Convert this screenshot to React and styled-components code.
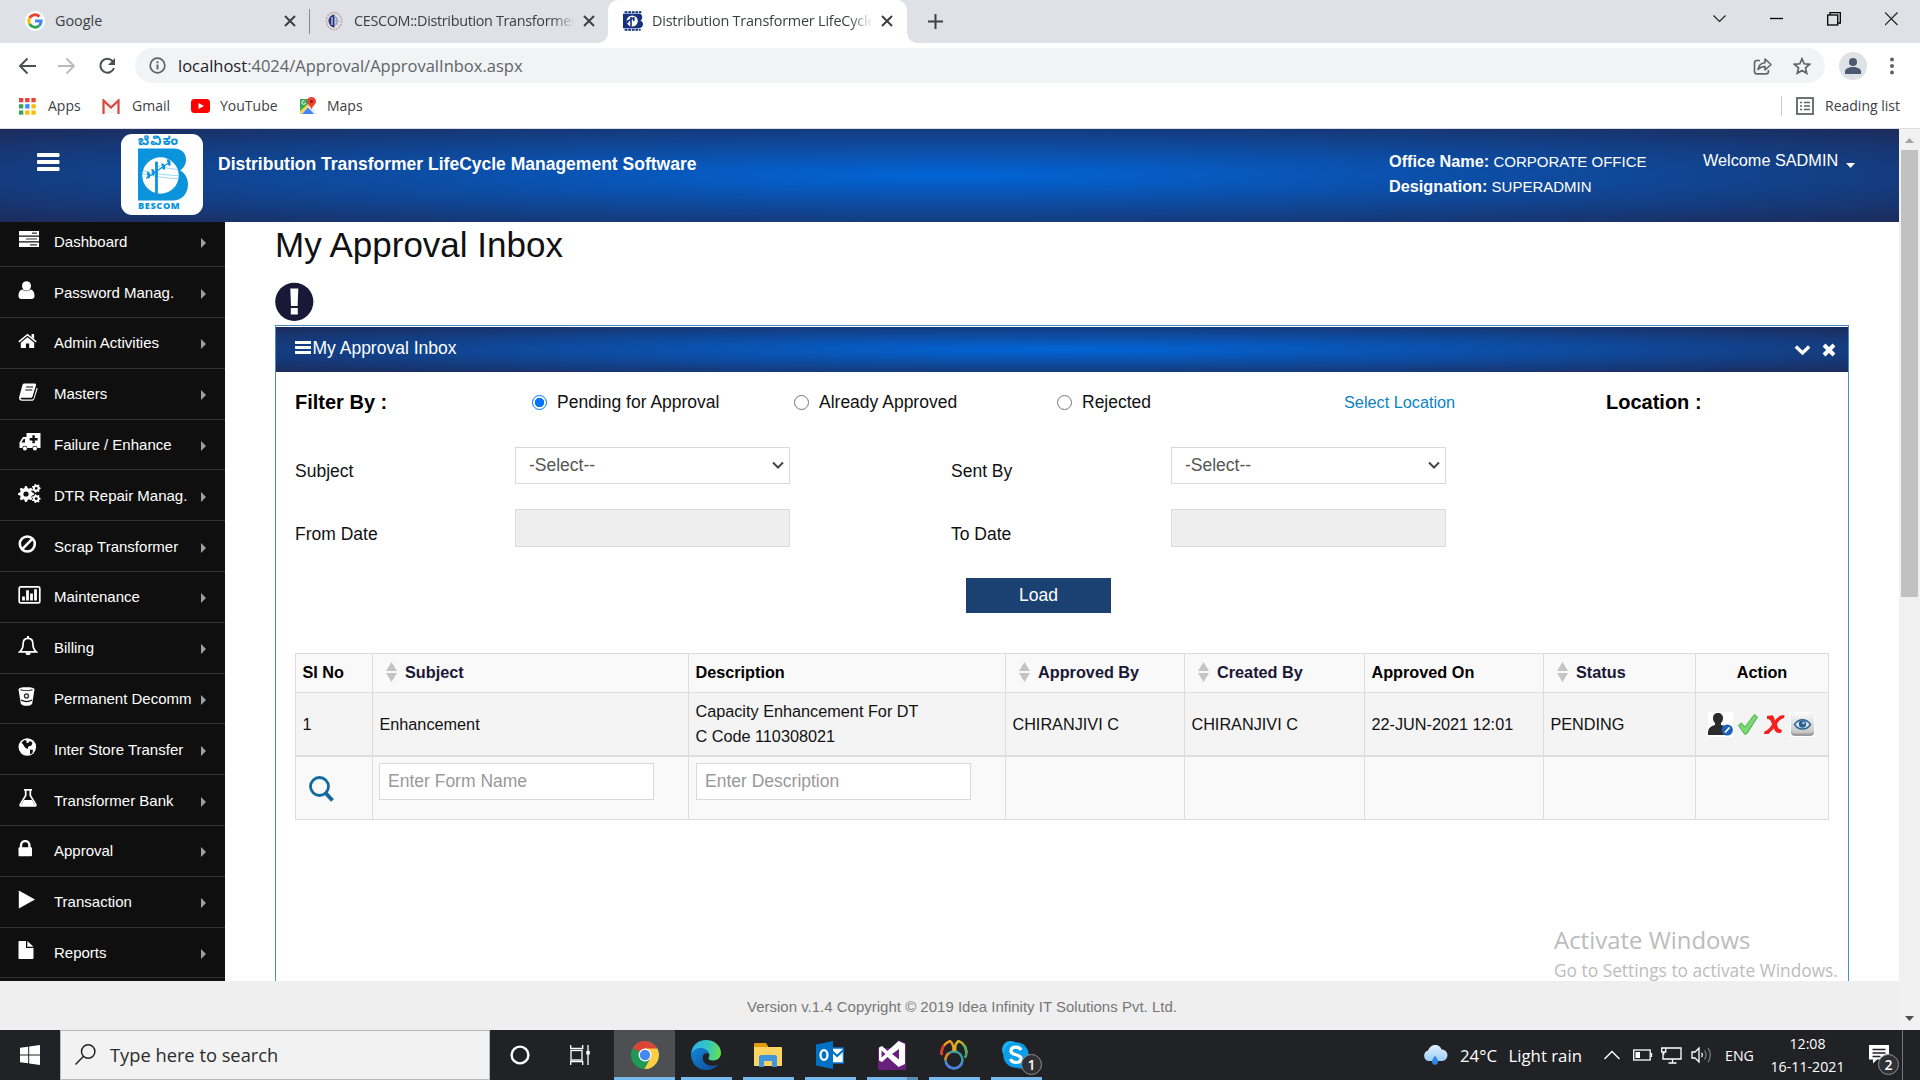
import React from "react";
import styled, { createGlobalStyle, css } from "styled-components";

const Global = createGlobalStyle`
  *, *::before, *::after { box-sizing: border-box; }
  html, body { margin: 0; padding: 0; }
  body { width: 1920px; height: 1080px; overflow: hidden; background: #fff; }
  svg { display: block; flex: none; }
`;

const sans = css`font-family: "Liberation Sans", Arial, sans-serif;`;
const ui = css`font-family: "Open Sans", "Noto Sans", sans-serif;`;

const Screen = styled.div`
  display: flex;
  flex-direction: column;
  width: 1920px;
  height: 1080px;
  overflow: hidden;
  ${sans}
  color: #111;
`;

/* ---------- browser chrome ---------- */

const TabStrip = styled.div`
  display: flex;
  height: 43px;
  background: #dee1e6;
  ${ui}
  font-size: 14.4px;
  color: #3c4043;
`;

const Tab = styled.div`
  display: flex;
  align-items: center;
  position: relative;
  width: ${(p) => p.$w}px;
  height: 43px;
  padding: 0 ${(p) => p.$pr}px 2px ${(p) => p.$pl}px;
  border-radius: 10px 10px 0 0;
  background: ${(p) => (p.$active ? "#fff" : "transparent")};
  ${(p) => p.$active && css`
    &::before, &::after {
      content: "";
      position: absolute;
      bottom: 0;
      width: 10px;
      height: 10px;
    }
    &::before { left: -10px; background: radial-gradient(circle at 0 0, transparent 9.5px, #fff 10px); }
    &::after { right: -10px; background: radial-gradient(circle at 100% 0, transparent 9.5px, #fff 10px); }
  `}
`;

const TabDivider = styled.div`
  width: 1px;
  height: 25px;
  margin-top: 9px;
  background: #8a8d91;
`;

const TabLabel = styled.div`
  flex: 1;
  min-width: 0;
  margin: 0 10px 0 ${(p) => p.$gap}px;
  overflow: hidden;
  white-space: nowrap;
  line-height: 22px;
  letter-spacing: ${(p) => p.$ls || 0}px;
  mask-image: ${(p) => (p.$fade ? "linear-gradient(90deg, #000 90%, transparent 101%)" : "none")};
`;

const NewTab = styled.div`
  padding: 14px 0 0 21px;
`;

const WindowControls = styled.div`
  display: flex;
  margin-left: auto;
  width: 207px;
  gap: 44px;
  padding-top: 12px;
`;

const Toolbar = styled.div`
  display: flex;
  align-items: center;
  height: 45px;
  padding: 0 22px 0 18px;
  background: #fff;
`;

const NavButtons = styled.div`
  display: flex;
  align-items: center;
  gap: 22px;
  width: 117px;
`;

const AddressBar = styled.div`
  display: flex;
  align-items: center;
  width: 1690px;
  height: 35px;
  padding: 0 14px 0 14px;
  border-radius: 18px;
  background: #f1f3f4;
`;

const Url = styled.div`
  flex: 1;
  margin-left: 12px;
  ${ui}
  font-size: 16.5px;
  line-height: 24px;
  color: #5f6368;
  b { font-weight: 400; color: #202124; }
`;

const AddressActions = styled.div`
  display: flex;
  align-items: center;
  gap: 20px;
`;

const Avatar = styled.div`
  display: grid;
  place-items: center;
  width: 28px;
  height: 28px;
  margin: 0 23px 0 14px;
  border-radius: 50%;
  background: #dee1e6;
`;

const Bookmarks = styled.div`
  display: flex;
  align-items: center;
  height: 41px;
  padding: 0 18px 4px 19px;
  border-bottom: 1px solid #dadce0;
  background: #fff;
  ${ui}
  font-size: 14px;
  color: #3c4043;
`;

const Bookmark = styled.div`
  display: flex;
  align-items: center;
  gap: ${(p) => p.$gap}px;
  width: ${(p) => p.$w}px;
  line-height: 20px;
  white-space: nowrap;
`;

const ReadingList = styled(Bookmark)`
  margin-left: auto;
  padding-left: 14px;
  border-left: 1px solid #c8cacd;
`;

/* ---------- page ---------- */

const Viewport = styled.div`
  display: flex;
  height: 901px;
  background: #efefef;
`;

const Page = styled.div`
  display: flex;
  flex-direction: column;
  width: 1899px;
`;

const Header = styled.header`
  display: flex;
  height: 93px;
  background: radial-gradient(ellipse at center, #0264d6 1%, #1c2b5a 100%);
  color: #fff;
`;

const MenuButton = styled.div`
  width: 121px;
  padding: 24px 0 0 37px;
`;

const LogoCard = styled.div`
  display: grid;
  place-items: center;
  width: 82px;
  height: 81px;
  margin-top: 5px;
  padding-left: 2px;
  border-radius: 11px;
  background: #fff;
`;

const AppTitle = styled.div`
  flex: 1;
  padding: 25px 0 0 15px;
  font-size: 17.5px;
  font-weight: 700;
  line-height: 20px;
`;

const Office = styled.div`
  width: 314px;
  padding-top: 20px;
  font-size: 15px;
  line-height: 25px;
  b { font-size: 16.25px; }
`;

const Welcome = styled.div`
  display: flex;
  gap: 8px;
  width: 196px;
  padding-top: 21px;
  font-size: 16.25px;
  line-height: 20px;
  svg { margin-top: 13px; }
`;

const Body = styled.div`
  display: flex;
  height: 759px;
`;

const Sidebar = styled.nav`
  width: 225px;
  overflow: hidden;
  background: #0f0f0f;
`;

const MenuList = styled.div`
  margin-top: -5.6px;
`;

const MenuItem = styled.div`
  display: flex;
  align-items: center;
  height: 50.8px;
  padding: 1px 19px 0 18px;
  border-bottom: 1px solid #333;
  color: #fff;
  font-size: 15px;
  line-height: 20px;
  white-space: nowrap;
`;

const MenuIcon = styled.div`
  width: 36px;
  padding-bottom: 5px;
`;

const MenuArrow = styled.div`
  width: 5px;
  height: 10px;
  margin: 2px 0 0 auto;
  border: 5px solid transparent;
  border-left-color: #a0a0a0;
  border-right: 0;
`;

const Main = styled.main`
  width: 1674px;
  padding: 0 50px;
  background: #fff;
  overflow: hidden;
`;

const PageTitle = styled.h3`
  margin: 0 0 14px;
  padding-top: 3px;
  font-size: 35px;
  font-weight: 400;
  line-height: 40px;
  height: 46px;
  color: #111;
`;

const Panel = styled.section`
  width: 1574px;
  height: 700px;
  margin-top: 4px;
  padding-top: 1px;
  border: 1px solid #4a8bc2;
`;

const PanelHead = styled.div`
  display: flex;
  align-items: center;
  height: 45px;
  padding: 0 12px 3px 19px;
  background: radial-gradient(ellipse at center, #0264d6 1%, #1c2b5a 100%);
  color: #fff;
  font-size: 17.5px;
  line-height: 20px;
`;

const PanelTools = styled.div`
  display: flex;
  align-items: center;
  gap: 11px;
  margin: 3px 0 0 auto;
`;

const PanelBody = styled.div`
  padding: 0 19px;
`;

const FilterRow = styled.div`
  display: flex;
  align-items: center;
  height: 60px;
  font-size: 17.5px;
`;

const FilterCell = styled.div`
  display: flex;
  align-items: center;
  gap: 10px;
  width: ${(p) => p.$w}px;
`;

const Strong = styled.b`
  font-size: 20px;
  color: #000;
`;

const Radio = styled.span`
  width: 15px;
  height: 15px;
  border-radius: 50%;
  border: 1.4px solid ${(p) => (p.$on ? "#0075ff" : "#767676")};
  background: ${(p) => (p.$on ? "radial-gradient(circle, #0075ff 4.4px, #fff 5px)" : "#fff")};
`;

const Link = styled.a`
  color: #0a84c4;
  font-size: 16.25px;
`;

const FormGrid = styled.div`
  display: grid;
  grid-template-columns: 220px 436px 220px 275px;
  grid-template-rows: 62px 63px;
  margin-top: 15px;
  font-size: 17.5px;
`;

const Label = styled.label`
  line-height: 20px;
  padding-top: ${(p) => (p.$low ? 15 : 14)}px;
`;

const Select = styled.div`
  display: flex;
  align-items: center;
  justify-content: space-between;
  width: 275px;
  height: 37px;
  padding: 0 5px 0 13px;
  border: 1px solid #d9d9d9;
  background: #fff;
  color: #555;
`;

const DateBox = styled.div`
  width: 275px;
  height: 38px;
  border: 1px solid #dcdcdc;
  background: #eee;
`;

const LoadButton = styled.button`
  display: block;
  width: 145px;
  height: 35px;
  margin: 6px 0 40px 671px;
  padding: 0;
  border: 0;
  background: #1b4172;
  color: #fff;
  ${sans}
  font-size: 17.5px;
`;

const Table = styled.div`
  display: grid;
  grid-template-columns: 77px 316px 317px 179px 180px 179px 152px 133px;
  grid-template-rows: 39px 64px 63px;
  width: 1534px;
  border-top: 1px solid #ddd;
  border-left: 1px solid #ddd;
  font-size: 16.25px;
  line-height: 25px;
`;

const Cell = styled.div`
  display: flex;
  align-items: ${(p) => (p.$top ? "flex-start" : "center")};
  justify-content: ${(p) => (p.$center ? "center" : "flex-start")};
  padding: ${(p) => (p.$top ? "6px 6px" : "0 6.4px")};
  border-right: 1px solid #ddd;
  border-bottom: ${(p) => (p.$thick ? 2 : 1)}px solid #ddd;
  background: ${(p) => (p.$shade ? "#f4f4f4" : "#f9f9f9")};
  white-space: nowrap;
`;

const HeadCell = styled(Cell)`
  gap: 8.5px;
  padding-bottom: 2px;
  padding-left: ${(p) => (p.$sort ? 12.5 : 6.4)}px;
  font-weight: 700;
  color: ${(p) => (p.$sort ? "#1a1836" : "#000")};
`;

const TextInput = styled.div`
  width: 275px;
  height: 37px;
  margin-left: ${(p) => p.$shift || 0}px;
  padding: 5px 8px;
  border: 1px solid #d9d9d9;
  background: #fff;
  color: #999;
  font-size: 17.5px;
`;

const SearchIcon = styled.div`
  padding: 13px 0 0 7px;
`;

const Actions = styled.div`
  display: flex;
  align-items: center;
  gap: 5px;
  padding-left: 6px;
`;

const Footer = styled.footer`
  height: 49px;
  padding-left: 747px;
  background: #efefef;
  color: #777;
  font-size: 15px;
  line-height: 51px;
`;

const Scrollbar = styled.div`
  display: flex;
  flex-direction: column;
  align-items: center;
  width: 21px;
  height: 901px;
  padding: 9px 0;
  background: #f1f1f1;
`;

const Thumb = styled.div`
  width: 17px;
  height: 447px;
  margin: 7px 0 auto;
  background: #c1c1c1;
`;

const Watermark = styled.div`
  position: absolute;
  left: 1554px;
  top: 921px;
  height: 60px;
  overflow: hidden;
  ${ui}
  color: #bcbcbc;
  font-size: 17.33px;
  line-height: 24px;
  white-space: nowrap;
  strong { display: block; font-size: 23.95px; font-weight: 400; line-height: 37px; }
`;

/* ---------- taskbar ---------- */

const Taskbar = styled.div`
  display: flex;
  height: 50px;
  background: #212225;
  ${ui}
  color: #fff;
`;

const StartButton = styled.div`
  display: grid;
  place-items: center;
  width: 60px;
`;

const SearchBox = styled.div`
  display: flex;
  align-items: center;
  gap: 14px;
  width: 430px;
  padding: 0 0 2px 14px;
  border: 1px solid #b9b9b9;
  background: #f2f2f2;
  color: #2b2b2b;
  font-size: 18.3px;
`;

const TaskButton = styled.div`
  display: flex;
  align-items: center;
  justify-content: center;
  position: relative;
  width: ${(p) => p.$w || 62}px;
  height: 50px;
  padding-right: ${(p) => p.$pr || 0}px;
  background: ${(p) => (p.$active ? "#4e4f52" : "transparent")};
  &::after {
    content: "";
    position: absolute;
    left: ${(p) => (p.$active ? 0 : 6)}px;
    right: ${(p) => (p.$active ? 0 : 5)}px;
    bottom: 0;
    height: ${(p) => (p.$open ? 3 : 0)}px;
    background: ${(p) => (p.$multi ? "linear-gradient(90deg, #76b9ed 40px, #5b8db4 40px)" : "#76b9ed")};
  }
`;

const Badge = styled.span`
  display: grid;
  place-items: center;
  position: absolute;
  left: ${(p) => p.$x}px;
  top: 24px;
  width: 21px;
  height: 21px;
  border: 1px solid #929292;
  border-radius: 50%;
  background: #303134;
  font-size: 14px;
  line-height: 18px;
  font-weight: 600;
`;

const Tray = styled.div`
  display: flex;
  align-items: center;
  margin-left: auto;
  width: 498px;
`;

const TrayItem = styled.div`
  position: relative;
  width: ${(p) => p.$w}px;
  font-size: ${(p) => p.$size || 16}px;
  line-height: 23px;
  white-space: nowrap;
  text-align: ${(p) => p.$align || "left"};
`;

const ShowDesktop = styled.div`
  width: 6px;
  height: 50px;
  border-left: 1px solid #77787a;
`;

/* ---------- icons ---------- */

const Svg = ({ w, h, vb, children, ...rest }) => (
  <svg width={w} height={h} viewBox={vb || `0 0 ${w} ${h}`} fill="none" {...rest}>{children}</svg>
);

const CloseIcon = () => (
  <Svg w={12} h={12} stroke="#3c4043" strokeWidth="2"><path d="M1 1l10 10M11 1L1 11" /></Svg>
);

const GoogleIcon = () => (
  <Svg w={20} h={20}>
    <circle cx="10" cy="10" r="10" fill="#fff" />
    <g strokeWidth="2.9">
      <path d="M14.4 5.6A6.2 6.2 0 0 0 4.6 7" stroke="#ea4335" />
      <path d="M4.6 7a6.2 6.2 0 0 0 0 6" stroke="#fbbc05" />
      <path d="M4.6 13a6.2 6.2 0 0 0 9.6 1.6" stroke="#34a853" />
      <path d="M14.2 14.6a6.2 6.2 0 0 0 2-4.6H10" stroke="#4285f4" />
    </g>
  </Svg>
);

const CescomIcon = () => (
  <Svg w={18} h={20}>
    <ellipse cx="9" cy="10" rx="7.6" ry="8.6" stroke="#c9a0a0" strokeWidth="1.5" strokeDasharray="2 1" />
    <path d="M9.500 3.500a6 6.5 0 0 0 0 13z" fill="#27357e" />
    <path d="M9 4.5a5 6 0 0 1 0 11M9 7h4M9 10h5M9 13h4" stroke="#8b92b8" />
    <path d="M7 6v8" stroke="#fff" />
  </Svg>
);

const bShape = "M0 9h36c8 0 12 5 12 11 0 6-3 9-6 11 5 2 8 8 8 14 0 9-6 16-15 16H0z";

const BescomFavicon = () => (
  <Svg w={20} h={20} vb="0 0 50 50" fill="#15307c">
    <path d="M4 3h42M4 47h40" stroke="#15307c" strokeWidth="5" strokeDasharray="7 2" />
    <path d="M0 7h38c8 0 10 4 10 9s-2 6-5 8c5 2 7 5 7 9 0 6-5 10-13 10H0z" />
    <circle cx="23" cy="25" r="14" fill="#fff" />
    <path d="M20 15v24M9 27l20-11M12 23v7M27 17v8" stroke="#15307c" strokeWidth="4" />
  </Svg>
);

const LogoStack = styled.div`
  display: flex;
  flex-direction: column;
  width: 50px;
`;

const LogoText = styled.div`
  font-family: ${(p) => (p.$latin ? '"Open Sans", sans-serif' : '"Noto Sans Kannada", "Noto Sans", sans-serif')};
  font-size: ${(p) => (p.$latin ? 9.2 : 12)}px;
  font-weight: 800;
  line-height: 9px;
  height: 9px;
  width: 50px;
  color: #0b93dc;
  letter-spacing: ${(p) => (p.$latin ? 0.6 : 1.2)}px;
  white-space: nowrap;
`;

const LogoB = () => (
  <Svg w={50} h={53} vb="0 8.5 50 53">
    <path d={bShape} fill="#0b93dc" />
    <circle cx="22.500" cy="36" r="18.2" fill="#fff" />
    <g stroke="#0b93dc">
      <path d="M18.500 22v32" strokeWidth="2.800" />
      <path d="M8 39l24-16.500" strokeWidth="1.200" />
      <path d="M9 33.500c2 0 2.500 3 1 5M13.500 30.500c2 0 3 3 1 5M23.500 25c2 0 3 2 2 5M29 21c2 0 3 2 2 5" strokeWidth="2.600" />
      <path d="M5 31c10 3 26 5 35 5M5 34c10 3 26 5 35 5M20 27l19 3" strokeWidth=".4" />
    </g>
  </Svg>
);

const GearPath = ({ cx, cy, r, teeth, hole }) => {
  const pts = [];
  const n = teeth * 4;
  for (let i = 0; i < n; i++) {
    const a = ((i - 0.5) / n) * Math.PI * 2;
    const rad = i % 4 < 2 ? r : r * 0.76;
    pts.push(`${(cx + rad * Math.cos(a)).toFixed(2)} ${(cy + rad * Math.sin(a)).toFixed(2)}`);
  }
  const d = `M${pts.join("L")}ZM${cx - hole} ${cy}a${hole} ${hole} 0 1 0 ${hole * 2} 0a${hole} ${hole} 0 1 0 ${-hole * 2} 0Z`;
  return <path d={d} fill="#fff" fillRule="evenodd" />;
};

const menuIcons = {
  tasks: (
    <Svg w={22} h={17}>
      <path d="M1 0h20v4.500H1zM1 5.800h20v4.500H1zM1 11.600h20v4.500H1z" fill="#fff" />
      <path d="M14 2.200h5M8 8h11M12 13.800h7" stroke="#333" strokeWidth="1.200" />
    </Svg>
  ),
  user: (
    <Svg w={17} h={18}>
      <ellipse cx="8.500" cy="5" rx="4.500" ry="4.800" fill="#fff" />
      <path d="M4.500 8.500C1.500 9 .5 12 .5 15c0 2 1.200 3 3 3h10c1.800 0 3-1 3-3 0-3-1-6-4-6.500-2.200 2.200-5.800 2.200-8 0z" fill="#fff" />
    </Svg>
  ),
  home: (
    <Svg w={19} h={16}>
      <path d="M9.500 4.200l6.700 5.500V15h-5v-4.600H7.900V15H2.800V9.700z" fill="#fff" />
      <path d="M.8 8.800L9.500 1.600l8.700 7.200" stroke="#fff" strokeWidth="1.500" />
      <path d="M13.600 1h2.500v5l-2.500-2z" fill="#fff" />
    </Svg>
  ),
  book: (
    <Svg w={20} h={18}>
      <path d="M6.200.5h10.600c1 0 1.500.8 1.200 1.700l-3.400 11c-.3 1-1 1.500-2 1.500H3.400c-.7 0-.9.400-.6 1 .2.500.7.700 1.400.700h10c.6 0 1.100-.3 1.300-.9l3.200-10.800c.8.300 1 1 .7 1.900L16.300 16c-.4 1.200-1.200 1.800-2.400 1.800H4c-2 0-3.400-1.700-2.900-3.500L4.500 2C4.800 1 5.400.5 6.200.5z" fill="#fff" />
      <path d="M8 4h7M7.200 7h7" stroke="#0f0f0f" strokeWidth="1.100" />
    </Svg>
  ),
  ambulance: (
    <Svg w={23} h={19}>
      <path d="M8.500 0h14v15h-3a2.700 2.700 0 0 0-5.300 0H9.500a2.700 2.700 0 0 0-5.300 0H1.500V9.500L5 4h3.500z" fill="#fff" />
      <circle cx="6.900" cy="15.600" r="2" fill="#fff" /><circle cx="16.900" cy="15.600" r="2" fill="#fff" />
      <path d="M15.600 2.200v8M11.600 6.200h8" stroke="#0f0f0f" strokeWidth="2.400" />
      <path d="M7 6v3.600H3.400L5.700 6z" fill="#0f0f0f" />
    </Svg>
  ),
  cogs: (
    <Svg w={23} h={19}>
      <GearPath cx={8} cy={10} r={8} teeth={8} hole={2.6} />
      <GearPath cx={18.2} cy={4.3} r={4.5} teeth={7} hole={1.4} />
      <GearPath cx={18.2} cy={14.7} r={4.5} teeth={7} hole={1.4} />
    </Svg>
  ),
  ban: (
    <Svg w={19} h={18} stroke="#fff" strokeWidth="2.600"><circle cx="9.300" cy="9" r="7.500" /><path d="M4 14.300L14.600 3.700" /></Svg>
  ),
  chart: (
    <Svg w={23} h={18}>
      <rect x="1.200" y=".9" width="20.600" height="16" rx="1.500" stroke="#fff" strokeWidth="1.700" />
      <path d="M5.500 14.600v-4M9.500 14.600V4.200M13.500 14.600V7.500M17.500 14.600V3.200" stroke="#fff" strokeWidth="2.800" />
    </Svg>
  ),
  bell: (
    <Svg w={20} h={20}>
      <path d="M10 2.400c-3.400 0-4.900 2.500-4.900 5.600 0 3.900-1.300 6-3.400 7.800h16.600c-2.100-1.800-3.400-3.900-3.400-7.800 0-3.100-1.500-5.600-4.900-5.600z" stroke="#fff" strokeWidth="1.700" />
      <path d="M10 0v2.500" stroke="#fff" strokeWidth="2" /><path d="M7.500 16.500h5.200a2.600 2.600 0 0 1-5.200 0z" fill="#fff" />
    </Svg>
  ),
  bucket: (
    <Svg w={18} h={19}>
      <path d="M.5 2.500C.5.800 4 .2 8.500.2s8 .6 8 2.300l-2.300 14c-.7 1.500-2.700 2.300-5.700 2.300s-5-.8-5.700-2.300z" fill="#fff" />
      <path d="M2.500 2.700c3 1 9 1 12 0M3 13c3.500 2 7.500 2 11 0" stroke="#0f0f0f" strokeWidth="1.100" />
      <circle cx="8.500" cy="9" r="2" stroke="#333" strokeWidth="1.400" />
    </Svg>
  ),
  globe: (
    <Svg w={19} h={18}>
      <circle cx="9.300" cy="9" r="8.800" fill="#fff" />
      <path d="M3.500 4.500l3-2.500 2.500 1-1 1.500 2 .5L12 3l2.500 1.500-1 3-3 1-1 2.500L7 9.500 5.500 7zM12 11.500l3 .5-.5 3-2.500 1.500z" fill="#0f0f0f" />
    </Svg>
  ),
  flask: (
    <Svg w={20} h={18}>
      <path d="M7.700 1v5.500L2.300 15.300c-.5 1 0 1.700 1 1.700h13.400c1 0 1.500-.7 1-1.700L12.300 6.500V1M6 .9h8" stroke="#fff" strokeWidth="1.700" />
      <path d="M6 11h8l3.500 6H2.500z" fill="#fff" />
    </Svg>
  ),
  lock: (
    <Svg w={15} h={17}>
      <path d="M3 8V5.300a4.200 4.200 0 0 1 8.400 0V8" stroke="#fff" strokeWidth="2.400" /><rect x=".5" y="7.300" width="13.500" height="9" rx="1" fill="#fff" />
    </Svg>
  ),
  play: <Svg w={18} h={19}><path d="M.8.500L17 9.500.8 18.500z" fill="#fff" /></Svg>,
  file: (
    <Svg w={16} h={18}><path d="M1.500 0H8v7h7.500v10c0 .600-.4 1-1 1h-13c-.6 0-1-.4-1-1V1c0-.6.400-1 1-1z" fill="#fff" /><path d="M9.300 0l6.200 5.800H9.300z" fill="#fff" /></Svg>
  ),
};

const menu = [
  ["Dashboard", "tasks"], ["Password Manag.", "user"], ["Admin Activities", "home"], ["Masters", "book"],
  ["Failure / Enhance", "ambulance"], ["DTR Repair Manag.", "cogs"], ["Scrap Transformer", "ban"],
  ["Maintenance", "chart"], ["Billing", "bell"], ["Permanent Decomm", "bucket"], ["Inter Store Transfer", "globe"],
  ["Transformer Bank", "flask"], ["Approval", "lock"], ["Transaction", "play"], ["Reports", "file"],
];

const columns = [
  ["SI No"], ["Subject", true], ["Description"], ["Approved By", true], ["Created By", true],
  ["Approved On"], ["Status", true], ["Action", false, true],
];

const SortIcon = () => (
  <Svg w={11} h={20}><path d="M5.500 0L11 9H0zM0 11h11l-5.500 9z" fill="#c4c4c4" /></Svg>
);

const SelectArrow = () => (
  <Svg w={12} h={9}><path d="M1 1.500l5 5 5-5" stroke="#444" strokeWidth="2" /></Svg>
);

const ActionIcons = () => (
  <Actions>
    <Svg w={25} h={25}>
      <rect width="25" height="25" fill="#fff" />
      <path d="M10 1c3 0 5 2 5 5 0 2-.7 4-2 5v2c4 .8 7 2.500 7 8v2H0v-2c0-5 3-7 7-8v-2C5.700 10 5 8 5 6c0-3 2-5 5-5z" fill="#2c2c2e" />
      <circle cx="19.300" cy="18" r="5.600" fill="#1c62b9" />
      <path d="M17 20.500l4.500-5" stroke="#fff" strokeWidth="1.800" />
    </Svg>
    <Svg w={20} h={21}>
      <path d="M.5 11.500l3-2.500 3.500 4L16.500.5 19.500 3 9 19.500l-2 1z" fill="#7ad972" stroke="#3fae40" />
    </Svg>
    <Svg w={22} h={21}>
      <path d="M4 2l5-.800c1.500 0 2.500 3 3 5.500C14 3.500 17 1 21.500 1l-.5 3c-3.500 1-5.500 3-7 6 .5 3 1.500 5.500 5 6l-1 3c-4 .5-6-1-7-4.500-2 1.500-3.500 3.500-5.500 5.500L1 20l.5-2.500C5 16 7.500 13 9 10.500 8.500 7.500 7.500 5 4 5z" fill="#f3201c" />
    </Svg>
    <Svg w={25} h={25}>
      <defs><linearGradient id="key" x2="0" y2="1"><stop stopColor="#fafafa" /><stop offset="1" stopColor="#c4c4c4" /></linearGradient></defs>
      <rect width="25" height="25" fill="#fff" />
      <rect x="1" y="1" width="23" height="23" rx="4" fill="#9c9c9c" />
      <rect x="1" y="1" width="23" height="20.500" rx="4" fill="url(#key)" />
      <path d="M4.500 12.500c4-6.500 12-6.500 16 0-4 6-12 6-16 0z" fill="#dbe9f2" stroke="#2e6591" strokeWidth="1.500" />
      <circle cx="12.500" cy="12" r="3.700" fill="#2a618f" /><circle cx="13.500" cy="11" r="1.300" fill="#a8cce6" />
    </Svg>
  </Actions>
);

const ChromeIcon = () => (
  <Svg w={28} h={28}>
    <circle cx="14" cy="14" r="14" fill="#1e9a55" />
    <path d="M14 14L1.900 7A14 14 0 0 1 26.100 7z" fill="#db4437" />
    <path d="M14 7.500h12.400A14 14 0 0 1 13.500 28l6-11z" fill="#ffcd41" />
    <path d="M1.900 7A14 14 0 0 1 14 0v10z" fill="#db4437" />
    <circle cx="14" cy="14" r="6.500" fill="#fff" /><circle cx="14" cy="14" r="5.200" fill="#4688f1" />
  </Svg>
);

const EdgeIcon = () => (
  <Svg w={30} h={30}>
    <defs>
      <linearGradient id="ea" x1="0" y1=".3" x2="1" y2=".4"><stop stopColor="#2bb0ec" /><stop offset=".6" stopColor="#36c9b8" /><stop offset="1" stopColor="#66e04d" /></linearGradient>
      <linearGradient id="eb" x2="1" y2="1"><stop stopColor="#1287d8" /><stop offset="1" stopColor="#104a94" /></linearGradient>
    </defs>
    <path d="M0 14C1 5 7 0 15 0c9 0 15 6 15 13 0 5-4 7.500-8 7.500-3 0-5-1-4.500-2.500 1-1.500 1.500-3 0-5.500C15 8.500 5 8 0 14z" fill="url(#ea)" />
    <path d="M0 14C3 8 10 7 14 9c3 1.500 4 4 3 5-3-2-6 1-5 6 1 4 6 6.500 12 5.500 1.500-.5 3-1 3.500-1.500C25 28 20 30 15 30 6 30 0 23 0 14z" fill="url(#eb)" />
  </Svg>
);

const FolderIcon = () => (
  <Svg w={28} h={24}>
    <path d="M0 1c0-.6.400-1 1-1h11l2 3v5H0z" fill="#e09c0c" />
    <path d="M0 4h27c.600 0 1 .4 1 1v18H0z" fill="#fcd462" />
    <path d="M5 24V14c0-1 .800-2 2-2h14c1.200 0 2 1 2 2v10h-5v-6h-8v6z" fill="#3f96dc" />
  </Svg>
);

const OutlookIcon = () => (
  <Svg w={28} h={28}>
    <rect x="15" y="7" width="12.500" height="15" fill="#fff" stroke="#0072c6" strokeWidth="1.500" />
    <path d="M15 9l6 6 6.500-6" stroke="#0072c6" strokeWidth="2" />
    <path d="M0 3.500L17 0v28L0 24.500z" fill="#0072c6" />
    <ellipse cx="8" cy="14" rx="3.500" ry="4.800" stroke="#fff" strokeWidth="2.300" />
  </Svg>
);

const VsIcon = () => (
  <Svg w={28} h={30}>
    <path d="M0 8h20V0l8 3v27H0z" fill="#68217a" />
    <path d="M20.500 1L27 4v20l-6.500 3-11-10L4 22l-3-1.500v-13L4 6l5.500 5z" fill="#fff" />
    <path d="M3.500 10.500v7l4-3.500zM21 9l-7 5 7 5.500z" fill="#68217a" />
  </Svg>
);

const NavicatIcon = () => (
  <Svg w={28} h={30} strokeWidth="2.400">
    <circle cx="14" cy="20" r="8.500" stroke="#38a0a8" />
    <path d="M6 22.500a8.500 8.500 0 0 0 16 0" stroke="#4f7fe0" />
    <path d="M5.500 20A8.500 8.500 0 0 1 9 13" stroke="#f0801e" />
    <path d="M2 15C.5 9 4 3 10 1c3 2 4 7 3 10" stroke="#f19a1c" />
    <path d="M2 15c-1-4 0-7 2-9.500" stroke="#e33a2b" />
    <path d="M15.500 11c-1-4 .5-8 3-10 5 2 9 7 7.500 13" stroke="#d8b52a" />
    <path d="M26 14c.500 2-.5 3-1.500 3.500M23 4.500c2.500 2.500 3.700 6 3 9.500" stroke="#4dad6a" />
  </Svg>
);

const SkypeIcon = () => (
  <Svg w={28} h={28}>
    <circle cx="8.500" cy="8.500" r="8.500" fill="#1bb1f4" /><circle cx="19.500" cy="19.500" r="8.500" fill="#0a84dc" /><circle cx="14" cy="14" r="12.700" fill="#0b9fea" />
    <path d="M19 9c-1-2-3-2.800-5-2.800-3 0-5 1.500-5 3.800 0 5 10 2.500 10 7.500 0 2.500-2 4-5 4-2.500 0-4.500-1-5.500-3.500" stroke="#fff" strokeWidth="3.200" />
  </Svg>
);

export default function App() {
  return (
    <Screen>
      <Global />
      <TabStrip>
        <Tab $w={309} $pl={25} $pr={13}>
          <GoogleIcon /><TabLabel $gap={10}>Google</TabLabel><CloseIcon />
        </Tab>
        <TabDivider />
        <Tab $w={298} $pl={15} $pr={13}>
          <CescomIcon /><TabLabel $gap={11} $fade $ls={-0.33}>CESCOM::Distribution Transformer</TabLabel><CloseIcon />
        </Tab>
        <Tab $w={299} $pl={15} $pr={14} $active>
          <BescomFavicon /><TabLabel $gap={9} $fade $ls={-0.2}>Distribution Transformer LifeCycle</TabLabel><CloseIcon />
        </Tab>
        <NewTab><Svg w={15} h={15} stroke="#3c4043" strokeWidth="2"><path d="M7.500 0v15M0 7.500h15" /></Svg></NewTab>
        <WindowControls>
          <Svg w={13} h={14} stroke="#222" strokeWidth="1.200"><path d="M.5 3.500l6 6 6-6" /></Svg>
          <Svg w={13} h={14} stroke="#000" strokeWidth="1.300"><path d="M0 6.500h13" /></Svg>
          <Svg w={14} h={14} stroke="#000" strokeWidth="1.300"><rect x=".7" y="3" width="10" height="10" /><path d="M3 3V.7h10.300V11H11" /></Svg>
          <Svg w={14} h={14} stroke="#222" strokeWidth="1.200"><path d="M0 .5l12.500 12.500M12.500.5L0 13" /></Svg>
        </WindowControls>
      </TabStrip>

      <Toolbar>
        <NavButtons>
          <Svg w={18} h={18} stroke="#4a4d51" strokeWidth="1.900"><path d="M18 9H2M9.500 1.500L2 9l7.500 7.500" /></Svg>
          <Svg w={18} h={18} stroke="#b9bbbe" strokeWidth="1.900"><path d="M0 9h16M8.500 1.500L16 9l-7.500 7.500" /></Svg>
          <Svg w={18} h={18} stroke="#4a4d51" strokeWidth="2"><path d="M15 4.500A7 7 0 1 0 16 11" /><path d="M17 1v7h-7z" fill="#4a4d51" stroke="none" /></Svg>
        </NavButtons>
        <AddressBar>
          <Svg w={17} h={17} stroke="#5f6368"><circle cx="8.500" cy="8.500" r="7.300" strokeWidth="1.700" /><path d="M8.500 7.500v5M8.500 4.300v1.900" strokeWidth="1.900" /></Svg>
          <Url><b>localhost</b>:4024/Approval/ApprovalInbox.aspx</Url>
          <AddressActions>
            <Svg w={20} h={18} stroke="#5f6368" strokeWidth="1.600"><path d="M7 3.500H4c-1.500 0-2.500 1-2.500 2.500v8.500c0 1.400 1 2.400 2.500 2.400h9c1.400 0 2.400-1 2.400-2.400V13" /><path d="M5 12.500c.5-4 3-6.500 7-6.800V2l6 5.500-6 5.500V9.500c-3 0-5 .8-7 3z" strokeLinejoin="round" /></Svg>
            <Svg w={18} h={18} stroke="#5f6368" strokeWidth="1.700"><path d="M9 1.800l2.200 5 5.400.5-4.100 3.600 1.200 5.300L9 13.400l-4.700 2.800 1.200-5.300L1.400 7.300l5.400-.5z" /></Svg>
          </AddressActions>
        </AddressBar>
        <Avatar><Svg w={16} h={16}><circle cx="8" cy="4" r="4" fill="#4b5a70" /><path d="M0 16v-2.500C0 10.500 4 9 8 9s8 1.500 8 4.500V16z" fill="#4b5a70" /></Svg></Avatar>
        <Svg w={4} h={18} fill="#5f6368"><circle cx="2" cy="2.500" r="2" /><circle cx="2" cy="9" r="2" /><circle cx="2" cy="15.500" r="2" /></Svg>
      </Toolbar>

      <Bookmarks>
        <Bookmark $w={83} $gap={12}>
          <Svg w={17} h={17}>
            {["#ea4335", "#ea4335", "#ea4335", "#34a853", "#4285f4", "#fbbc05", "#34a853", "#fbbc05", "#fbbc05"].map((c, i) => (
              <rect key={i} x={(i % 3) * 6.2} y={Math.floor(i / 3) * 6.2} width="4.300" height="4.300" fill={c} />
            ))}
          </Svg>Apps
        </Bookmark>
        <Bookmark $w={89} $gap={11}>
          <Svg w={19} h={15}><path d="M1 1h17v13H1z" fill="#f4f4f4" /><path d="M1.500 15V1.500l7.500 7 7.500-7V15" stroke="#d9483b" strokeWidth="2.200" /></Svg>Gmail
        </Bookmark>
        <Bookmark $w={108} $gap={9}>
          <Svg w={20} h={14}><rect width="19" height="14" rx="3.500" fill="#f00" /><path d="M7.500 4l5.500 3-5.500 3z" fill="#fff" /></Svg>YouTube
        </Bookmark>
        <Bookmark $w={80} $gap={10}>
          <Svg w={18} h={18}><path d="M1 2h11v15H1z" fill="#34a853" /><path d="M1 17L12 6l5 11z" fill="#e8eaed" /><path d="M3 17l6-6.500L15 17z" fill="#4285f4" /><path d="M1 14L12 4v3L2 17H1z" fill="#fbd04a" /><path d="M12.500 0C15 0 17 2 17 4.500c0 3-3.500 4-4.500 8-1-4-4.500-5-4.500-8C8 2 10 0 12.500 0z" fill="#e94335" /><circle cx="12.500" cy="4.500" r="1.500" fill="#8c1a12" /><path d="M6.500 5.500a1.800 1.800 0 1 1-1-1.600" stroke="#fff" /></Svg>Maps
        </Bookmark>
        <ReadingList $w={121} $gap={11}>
          <Svg w={18} h={18} stroke="#5f6368"><rect x="1" y="1" width="16" height="16" strokeWidth="1.800" /><path d="M4 5.500h2M8 5.500h6M4 9h2M8 9h6M4 12.500h2M8 12.500h6" strokeWidth="1.600" /></Svg>Reading list
        </ReadingList>
      </Bookmarks>

      <Viewport>
        <Page>
          <Header>
            <MenuButton><Svg w={23} h={19} fill="#fff"><rect width="22.500" height="4" rx="1" /><rect y="7" width="22.500" height="4" rx="1" /><rect y="14" width="22.500" height="4" rx="1" /></Svg></MenuButton>
            <LogoCard>
              <LogoStack>
                <LogoText>ಬೆವಿಕಂ</LogoText>
                <LogoB />
                <LogoText $latin>BESCOM</LogoText>
              </LogoStack>
            </LogoCard>
            <AppTitle>Distribution Transformer LifeCycle Management Software</AppTitle>
            <Office>
              <div><b>Office Name:</b> CORPORATE OFFICE</div>
              <div><b>Designation:</b> SUPERADMIN</div>
            </Office>
            <Welcome>Welcome SADMIN<Svg w={9} h={5}><path d="M0 0h9L4.500 5z" fill="#fff" /></Svg></Welcome>
          </Header>
          <Body>
            <Sidebar>
              <MenuList>
                {menu.map(([label, icon]) => (
                  <MenuItem key={label}><MenuIcon>{menuIcons[icon]}</MenuIcon>{label}<MenuArrow /></MenuItem>
                ))}
              </MenuList>
            </Sidebar>
            <Main>
              <PageTitle>My Approval Inbox</PageTitle>
              <Svg w={39} h={39}><circle cx="19.300" cy="19.800" r="19.100" fill="#1a1836" /><path d="M15.300 6.500h8l-.7 17.500h-6.600zM15.800 26h7v6.500h-7z" fill="#fff" /></Svg>
              <Panel>
                <PanelHead>
                  <Svg w={17.5} h={14} fill="#fff"><rect width="16" height="3" /><rect y="5" width="16" height="3" /><rect y="10" width="16" height="3" /></Svg>
                  My Approval Inbox
                  <PanelTools>
                    <Svg w={17} h={12}><path d="M1.800 2.500l6.700 6.500 6.700-6.500" stroke="#fff" strokeWidth="3.400" /></Svg>
                    <Svg w={14} h={14}><path d="M2 2l10 10M12 2L2 12" stroke="#fff" strokeWidth="4" /></Svg>
                  </PanelTools>
                </PanelHead>
                <PanelBody>
                  <FilterRow>
                    <FilterCell $w={237}><Strong>Filter By :</Strong></FilterCell>
                    <FilterCell $w={262}><Radio $on />Pending for Approval</FilterCell>
                    <FilterCell $w={263}><Radio />Already Approved</FilterCell>
                    <FilterCell $w={287}><Radio />Rejected</FilterCell>
                    <FilterCell $w={262}><Link>Select Location</Link></FilterCell>
                    <Strong>Location :</Strong>
                  </FilterRow>
                  <FormGrid>
                    <Label>Subject</Label><Select>-Select--<SelectArrow /></Select>
                    <Label>Sent By</Label><Select>-Select--<SelectArrow /></Select>
                    <Label $low>From Date</Label><DateBox />
                    <Label $low>To Date</Label><DateBox />
                  </FormGrid>
                  <LoadButton>Load</LoadButton>
                  <Table>
                    {columns.map(([label, sort, center]) => (
                      <HeadCell key={label} $sort={sort} $center={center}>{sort && <SortIcon />}{label}</HeadCell>
                    ))}
                    <Cell $shade $thick>1</Cell>
                    <Cell $shade $thick>Enhancement</Cell>
                    <Cell $shade $thick>Capacity Enhancement For DT<br />C Code 110308021</Cell>
                    <Cell $shade $thick>CHIRANJIVI C</Cell>
                    <Cell $shade $thick>CHIRANJIVI C</Cell>
                    <Cell $shade $thick>22-JUN-2021 12:01</Cell>
                    <Cell $shade $thick>PENDING</Cell>
                    <Cell $shade $thick><ActionIcons /></Cell>
                    <Cell $top><SearchIcon><Svg w={25} h={26} stroke="#10699f"><circle cx="10.500" cy="10.500" r="9" strokeWidth="2.800" /><path d="M16.500 17l7 7.500" strokeWidth="4" /></Svg></SearchIcon></Cell>
                    <Cell $top><TextInput>Enter Form Name</TextInput></Cell>
                    <Cell $top><TextInput $shift={1}>Enter Description</TextInput></Cell>
                    <Cell /><Cell /><Cell /><Cell /><Cell />
                  </Table>
                </PanelBody>
              </Panel>
            </Main>
          </Body>
          <Footer>Version v.1.4 Copyright © 2019 Idea Infinity IT Solutions Pvt. Ltd.</Footer>
        </Page>
        <Scrollbar>
          <Svg w={9} h={5}><path d="M0 5h9L4.500 0z" fill="#a3a3a3" /></Svg>
          <Thumb />
          <Svg w={9} h={5}><path d="M0 0h9L4.500 5z" fill="#505050" /></Svg>
        </Scrollbar>
      </Viewport>

      <Watermark><strong>Activate Windows</strong>Go to Settings to activate Windows.</Watermark>

      <Taskbar>
        <StartButton><Svg w={20} h={20}><path d="M0 2.800l8.200-1.100v7.800H0zM9.200 1.500L20 0v9.500H9.200zM0 10.500h8.200v7.800L0 17.200zM9.200 10.500H20V20L9.200 18.500z" fill="#fff" /></Svg></StartButton>
        <SearchBox>
          <Svg w={21} h={21} stroke="#222" strokeWidth="1.500"><circle cx="13.200" cy="7.500" r="6.700" /><path d="M8.500 12.300L.5 20.500" /></Svg>
          Type here to search
        </SearchBox>
        <TaskButton $w={60}><Svg w={20} h={20}><circle cx="10" cy="10" r="8.400" stroke="#fff" strokeWidth="2.400" /></Svg></TaskButton>
        <TaskButton $w={64} $pr={3}><Svg w={21} h={20} stroke="#fff" strokeWidth="1.300"><rect x="1" y="5.500" width="11" height="9.500" /><path d="M.7 0v3.500h12V0M.7 20v-3.500h12V20M18 0v20" /><path d="M16.300 6h3.500v3.500h-3.500z" fill="#fff" stroke="none" /></Svg></TaskButton>
        <TaskButton $w={61} $active $open><ChromeIcon /></TaskButton>
        <TaskButton $open><EdgeIcon /></TaskButton>
        <TaskButton $open><FolderIcon /></TaskButton>
        <TaskButton $open><OutlookIcon /></TaskButton>
        <TaskButton $open $multi><VsIcon /></TaskButton>
        <TaskButton $open><NavicatIcon /></TaskButton>
        <TaskButton $open><SkypeIcon /><Badge $x={36}>1</Badge></TaskButton>
        <Tray>
          <TrayItem $w={38}>
            <Svg w={26} h={20}>
              <defs><linearGradient id="cl" x2="0" y2="1"><stop stopColor="#dff1fd" /><stop offset="1" stopColor="#9ccff5" /></linearGradient></defs>
              <path d="M6 16a5.500 5.500 0 0 1 0-10.500C8 1 11 0 13.500 0 17 0 19 2.500 19.500 4.500c3.500 0 6 2.500 6 5.500s-2.500 6-5.500 6z" fill="url(#cl)" />
              <path d="M13 10.500c2 3 3 4.500 3 6.300a3 3 0 0 1-6 0c0-1.800 1-3.300 3-6.300z" fill="#2f86e0" />
            </Svg>
          </TrayItem>
          <TrayItem $w={48.500} $size={16.8}>24°C</TrayItem>
          <TrayItem $w={95} $size={16.8}>Light rain</TrayItem>
          <TrayItem $w={29}><Svg w={16} h={10} stroke="#fff" strokeWidth="1.400"><path d="M.5 9L8 1.500 15.500 9" /></Svg></TrayItem>
          <TrayItem $w={28.500}><Svg w={20} h={12} stroke="#fff" strokeWidth="1.300"><rect x=".7" y="1" width="16.500" height="10" /><path d="M18.500 4v4" /><path d="M2.500 3h4.500v6H2.500z" fill="#fff" stroke="none" /></Svg></TrayItem>
          <TrayItem $w={30}><Svg w={21} h={17} stroke="#fff" strokeWidth="1.300"><path d="M5 1h15v11H2V6M7.500 16h8M11.500 12v4" /><path d="M.7 1h4v4h-4zM2.700 5v3" /></Svg></TrayItem>
          <TrayItem $w={34}><Svg w={22} h={18} stroke="#fff" strokeWidth="1.300"><path d="M1 6h3l4-4v14l-4-4H1zM10.500 7c1 1 1 3 0 4" /><path d="M13.500 4.500c2 2.500 2 6.500 0 9M17 2c3 4 3 10 0 14" stroke="#77787a" /></Svg></TrayItem>
          <TrayItem $w={33} $size={14.2}>ENG</TrayItem>
          <TrayItem $w={99} $size={14.2} $align="center">12:08<br />16-11-2021</TrayItem>
          <TrayItem $w={45}>
            <Svg w={44} h={50}><path d="M12 15h20v14.500H20l-4 4v-4h-4z" fill="#fff" /><path d="M15.500 19.500h13M15.500 23h13M15.500 26.500h8" stroke="#212225" strokeWidth="1.300" /></Svg>
            <Badge $x={21}>2</Badge>
          </TrayItem>
          <ShowDesktop />
        </Tray>
      </Taskbar>
    </Screen>
  );
}
